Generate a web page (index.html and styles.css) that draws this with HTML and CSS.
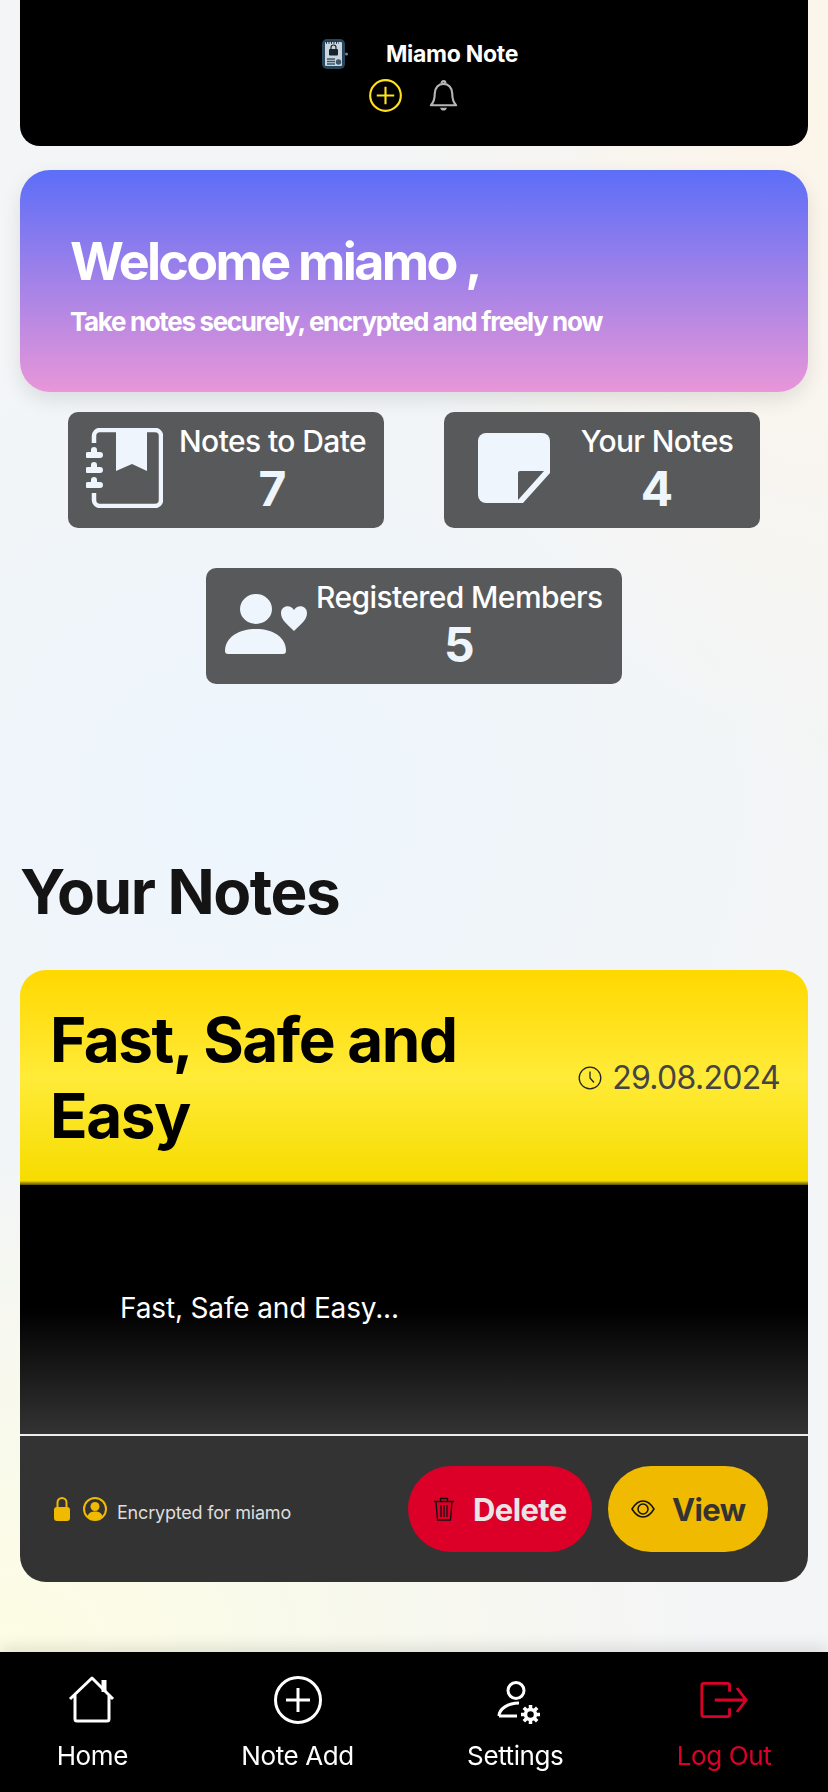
FILE: index.html
```html
<!DOCTYPE html>
<html lang="en">
<head>
    <meta charset="UTF-8">
    <meta name="viewport" content="width=device-width, initial-scale=1.0">
    <title>Miamo Note</title>
    <link rel="stylesheet" href="styles.css">
</head>
<body>
    <header class="top-bar">
        <div class="brand">
            <svg class="brand-logo" viewBox="0 0 26 32">
                <rect x="0" y="1" width="23" height="30" rx="5" fill="#27465c"/>
                <rect x="3" y="4" width="17" height="24" rx="1" fill="#c9d6de"/>
                <path d="M4 4.500h13" stroke="#1b2c38" stroke-width="2.500" stroke-dasharray="1 1.500"/>
                <rect x="7" y="11" width="9" height="6.500" rx="1" fill="#16242e"/>
                <path d="M9 11V9.500a2.500 2.500 0 0 1 5 0V11" fill="none" stroke="#16242e" stroke-width="1.200"/>
                <path d="M5 21h8M5 23.500h8M5 26h8" stroke="#3d5566" stroke-width="1.300"/>
                <circle cx="16.500" cy="24" r="2.700" fill="#3d5566"/>
                <circle cx="24.500" cy="16" r="1.500" fill="#6f8899"/>
            </svg>
            <span class="brand-name">Miamo Note</span>
        </div>
        <div class="top-icons">
            <svg class="top-icon" viewBox="0 0 34 34" fill="none" stroke="#ffe11f" stroke-width="2.200">
                <circle cx="17" cy="17" r="15.800"/>
                <path d="M17 8v18M8 17h18"/>
            </svg>
            <svg class="top-icon" viewBox="0 0 34 34" fill="none" stroke="#b5b5b5" stroke-width="2.200">
                <path d="M4 27c3-3 4-6 4-12 0-6 4-10 9-10s9 4 9 10c0 6 1 9 4 12z" stroke-linejoin="round"/>
                <path d="M15 4.500c0-3 4-3 4 0"/>
                <path d="M13.500 29.500h7c-1 4-6 4-7 0z" fill="#b5b5b5" stroke="none"/>
            </svg>
        </div>
    </header>

    <section class="hero">
        <h1>Welcome miamo ,</h1>
        <p>Take notes securely, encrypted and freely now</p>
    </section>

    <section class="stats">
        <div class="stat-row">
            <div class="stat-card">
                <svg class="stat-icon" viewBox="0 0 77 80">
                    <path d="M8 15V8a6 6 0 0 1 6-6h55a6 6 0 0 1 6 6v64a6 6 0 0 1-6 6H14a6 6 0 0 1-6-6v-7" fill="none" stroke="#eef5fd" stroke-width="4.500"/>
                    <path d="M30 2h31v41l-15-7-16 7z" fill="#eef5fd"/>
                    <path d="M5 22a3 3 0 0 1 6 0v2h3a2.500 2.500 0 0 1 0 6H2a2.500 2.500 0 0 1 0-6h3zM5 37a3 3 0 0 1 6 0v2h3a2.500 2.500 0 0 1 0 6H2a2.500 2.500 0 0 1 0-6h3zM5 52a3 3 0 0 1 6 0v2h3a2.500 2.500 0 0 1 0 6H2a2.500 2.500 0 0 1 0-6h3z" fill="#eef5fd"/>
                </svg>
                <div class="stat-text">
                    <span class="stat-label">Notes to Date</span>
                    <span class="stat-value">7</span>
                </div>
            </div>
            <div class="stat-card stat-card-notes">
                <svg class="stat-icon icon-note" viewBox="0 0 72 70">
                    <path d="M8 0h56a8 8 0 0 1 8 8v32L45 70H8a8 8 0 0 1-8-8V8a8 8 0 0 1 8-8z" fill="#eef5fd"/>
                    <path d="M42 38h24L40 67V40a2 2 0 0 1 2-2z" fill="#58595b"/>
                </svg>
                <div class="stat-text">
                    <span class="stat-label">Your Notes</span>
                    <span class="stat-value">4</span>
                </div>
            </div>
        </div>
        <div class="stat-row">
            <div class="stat-card stat-card-members">
                <svg class="stat-icon icon-members" viewBox="0 0 82 60">
                    <ellipse cx="31" cy="15" rx="16" ry="15" fill="#eef5fd"/>
                    <path d="M0 57c0-14 14-22 31-22s30 8 30 22a3 3 0 0 1-3 3H3a3 3 0 0 1-3-3z" fill="#eef5fd"/>
                    <path d="M69 37C62 30 56 26 56 19c0-8 10-9 13-3 3-6 13-5 13 3 0 7-6 11-13 18z" fill="#eef5fd"/>
                </svg>
                <div class="stat-text">
                    <span class="stat-label">Registered Members</span>
                    <span class="stat-value">5</span>
                </div>
            </div>
        </div>
    </section>

    <h2 class="section-title">Your Notes</h2>

    <article class="note">
        <div class="note-head">
            <h3>Fast, Safe and Easy</h3>
            <div class="note-date">
                <svg class="clock" viewBox="0 0 24 24" fill="none" stroke="#222" stroke-width="1.300">
                    <circle cx="12" cy="12" r="10.800"/>
                    <path d="M12 5.500V12l4 4.500"/>
                </svg>
                <span>29.08.2024</span>
            </div>
        </div>
        <div class="note-body">Fast, Safe and Easy...</div>
        <div class="note-foot">
            <div class="note-owner">
                <svg class="lock" viewBox="0 0 16 24">
                    <path d="M3.500 11V5.500a4.500 4.500 0 0 1 9 0V11" fill="none" stroke="#efba00" stroke-width="2"/>
                    <rect x="0" y="10" width="16" height="14" rx="3" fill="#efba00"/>
                </svg>
                <svg class="owner-icon" viewBox="0 0 24 24">
                    <circle cx="12" cy="12" r="11" fill="none" stroke="#efba00" stroke-width="2"/>
                    <circle cx="12" cy="9.500" r="4.500" fill="#efba00"/>
                    <path d="M4.500 19.500c1-4 4-5 7.500-5s6.500 1 7.500 5a11 11 0 0 1-15 0z" fill="#efba00"/>
                </svg>
                <span class="owner-text">Encrypted for miamo</span>
            </div>
            <div class="note-actions">
                <button class="btn btn-delete" type="button">
                    <svg class="btn-icon" viewBox="0 0 24 24" fill="none" stroke="#111" stroke-width="1.300">
                        <path d="M2 4.500h20M8.500 4.500V1.500h7v3M4 4.500 5.500 23h13L20 4.500M9 8v12M12 8v12M15 8v12"/>
                    </svg>
                    Delete
                </button>
                <button class="btn btn-view" type="button">
                    <svg class="btn-icon" viewBox="0 0 24 24" fill="none" stroke="#111" stroke-width="1.500">
                        <path d="M1 12c3-5 7-8 11-8s8 3 11 8c-3 5-7 8-11 8s-8-3-11-8z"/>
                        <circle cx="12" cy="12" r="5"/>
                    </svg>
                    View
                </button>
            </div>
        </div>
    </article>

    <nav class="bottom-nav">
        <a class="nav-item" href="#">
            <svg class="nav-icon" viewBox="0 0 48 48" fill="none" stroke="#fff" stroke-width="3">
                <path d="M2 23 24 2l21 21M7 19v24a2 2 0 0 0 2 2h30a2 2 0 0 0 2-2V19" stroke-linejoin="round"/>
                <path d="M36 4v12" stroke-width="5"/>
            </svg>
            Home
        </a>
        <a class="nav-item" href="#">
            <svg class="nav-icon" viewBox="0 0 48 48" fill="none" stroke="#fff" stroke-width="3">
                <circle cx="24" cy="24" r="22.500"/>
                <path d="M24 12v24M12 24h24"/>
            </svg>
            Note Add
        </a>
        <a class="nav-item" href="#">
            <svg class="nav-icon" viewBox="0 0 48 48" fill="none" stroke="#fff" stroke-width="3">
                <ellipse cx="25" cy="14.500" rx="8" ry="8"/>
                <path d="M8 40c0-7 9-13 20-13M8 40h18"/>
                <circle cx="39.500" cy="38.500" r="5" stroke-width="3.500"/>
                <path d="M39.500 29v3.500M39.500 44.500V48M30 38.500h3.500M45.500 38.500H49M32.800 31.800l2.500 2.500M43.700 42.700l2.500 2.500M46.200 31.800l-2.500 2.500M35.300 42.700l-2.500 2.500" stroke-width="3.500"/>
            </svg>
            Settings
        </a>
        <a class="nav-item nav-logout" href="#">
            <svg class="nav-icon" viewBox="0 0 52 40" fill="none" stroke="#dc0028" stroke-width="3">
                <path d="M32 11V4a2 2 0 0 0-2-2H4a2 2 0 0 0-2 2v32a2 2 0 0 0 2 2h26a2 2 0 0 0 2-2v-7"/>
                <path d="M16 20h34M40 7l10 13-10 13"/>
            </svg>
            Log Out
        </a>
    </nav>
</body>
</html>
```

FILE: styles.css
```css
* {
    box-sizing: border-box;
}

body, h1, h2, h3, p {
    margin: 0;
    padding: 0;
}

body {
    width: 828px;
    height: 1792px;
    overflow: hidden;
    padding: 0 20px;
    font-family: Inter, "Liberation Sans", sans-serif;
    background-color: #f4f5f6;
    background-image:
        radial-gradient(ellipse 420px 650px at 100% 120px, #fdf5ea 0, rgba(253, 245, 234, 0) 100%),
        radial-gradient(ellipse 700px 500px at 0 1650px, #fdfde4 0, rgba(253, 253, 228, 0) 100%),
        radial-gradient(ellipse 620px 560px at 30% 800px, #edf5fd 0, rgba(237, 245, 253, 0) 100%);
}

.top-bar {
    height: 146px;
    padding-top: 39px;
    background-color: #000;
    border-radius: 0 0 20px 20px;
    display: flex;
    flex-direction: column;
    align-items: center;
}

.brand {
    display: flex;
    align-items: center;
    gap: 38px;
    height: 30px;
}

.brand-logo {
    width: 26px;
    height: 32px;
    margin-left: 12px;
}

.brand-name {
    color: #fff;
    font-size: 23px;
    font-weight: 700;
    letter-spacing: -0.3px;
}

.top-icons {
    display: flex;
    gap: 25px;
    margin-top: 10px;
}

.top-icon {
    width: 33px;
    height: 33px;
}

.hero {
    height: 222px;
    margin-top: 24px;
    padding: 61px 50px 0;
    border-radius: 30px;
    color: #fff;
    background: linear-gradient(180deg, #5c6ef8, #e896d8);
    box-shadow: 0 8px 20px rgba(0, 0, 0, 0.1);
}

.hero h1 {
    font-size: 52px;
    line-height: 62px;
    font-weight: 700;
    letter-spacing: -2.7px;
}

.hero p {
    margin-top: 13px;
    font-size: 26px;
    line-height: 32px;
    font-weight: 700;
    letter-spacing: -1.35px;
}

.stats {
    margin-top: 20px;
    display: flex;
    flex-direction: column;
    gap: 40px;
}

.stat-row {
    display: flex;
    justify-content: center;
    gap: 60px;
}

.stat-card {
    width: 316px;
    height: 116px;
    padding: 14px 16px 0 18px;
    display: flex;
    align-items: flex-start;
    gap: 14px;
    color: #eef5fd;
    background-color: #58595b;
    border-radius: 10px;
}

.stat-card-notes {
    padding-right: 10px;
}

.stat-card-members {
    width: 416px;
    padding-right: 20px;
    gap: 9px;
}

.stat-icon {
    width: 77px;
    height: 80px;
    margin-top: 2px;
    flex-shrink: 0;
}

.icon-note {
    width: 72px;
    height: 70px;
    margin: 7px 0 0 16px;
}

.icon-members {
    width: 82px;
    height: 60px;
    margin: 12px 0 0 1px;
}

.stat-text {
    flex: 1;
    display: flex;
    flex-direction: column;
    align-items: center;
}

.stat-label {
    font-size: 30px;
    line-height: 30px;
    font-weight: 500;
    letter-spacing: -0.6px;
    color: #fff;
    white-space: nowrap;
}

.stat-value {
    margin-top: 4px;
    font-size: 48px;
    line-height: 58px;
    font-weight: 700;
}

.section-title {
    margin-top: 168px;
    height: 80px;
    font-size: 62px;
    line-height: 80px;
    font-weight: 700;
    letter-spacing: -1.5px;
    color: #141414;
}

.note {
    margin-top: 38px;
    height: 612px;
    border-radius: 26px;
    overflow: hidden;
    display: flex;
    flex-direction: column;
}

.note-head {
    height: 215px;
    padding: 0 28px 0 30px;
    display: flex;
    align-items: center;
    justify-content: space-between;
    background: linear-gradient(180deg, #ffd800 0, #ffeb38 50%, #f6dc00 98%, #5a4c00 100%);
}

.note-head h3 {
    width: 450px;
    font-size: 62px;
    line-height: 76px;
    font-weight: 700;
    letter-spacing: -1.5px;
    color: #000;
}

.note-date {
    display: flex;
    align-items: center;
    gap: 10px;
    font-size: 32px;
    letter-spacing: -0.7px;
    color: #444;
}

.clock {
    width: 24px;
    height: 24px;
}

.note-body {
    height: 251px;
    padding: 103px 0 0 100px;
    font-size: 28px;
    line-height: 40px;
    letter-spacing: -0.15px;
    color: #fff;
    background: linear-gradient(180deg, #000 0, #000 50%, #333 100%);
    border-bottom: 2px solid #eee;
}

.note-foot {
    flex: 1;
    padding: 0 40px 0 34px;
    display: flex;
    align-items: center;
    justify-content: space-between;
    background-color: #333;
}

.note-owner {
    display: flex;
    align-items: center;
    font-size: 18px;
    letter-spacing: -0.2px;
    color: #ddd;
}

.owner-text {
    margin-top: 6px;
}

.lock {
    width: 16px;
    height: 24px;
    margin-right: 13px;
}

.owner-icon {
    width: 24px;
    height: 24px;
    margin-right: 10px;
}

.note-actions {
    display: flex;
    gap: 16px;
}

.btn {
    height: 86px;
    display: flex;
    align-items: center;
    gap: 17px;
    border: none;
    border-radius: 43px;
    font-family: inherit;
    font-size: 31px;
    font-weight: 700;
    letter-spacing: -0.6px;
}

.btn-icon {
    width: 24px;
    height: 24px;
}

.btn-delete {
    width: 184px;
    padding: 0 0 0 24px;
    color: #e6e6e6;
    background-color: #dc0028;
}

.btn-view {
    width: 160px;
    padding: 0 0 0 23px;
    color: #333;
    background-color: #efba00;
}

.bottom-nav {
    position: fixed;
    left: 0;
    bottom: 0;
    width: 828px;
    height: 140px;
    display: flex;
    justify-content: space-around;
    background-color: #000;
    box-shadow: 0 -6px 14px rgba(0, 0, 0, 0.1);
}

.nav-item {
    padding-top: 24px;
    display: flex;
    flex-direction: column;
    align-items: center;
    gap: 16px;
    font-size: 26px;
    line-height: 32px;
    letter-spacing: -0.4px;
    color: #fff;
    text-decoration: none;
    white-space: nowrap;
}

.nav-icon {
    width: 48px;
    height: 48px;
    overflow: visible;
}

.nav-logout {
    color: #dc0028;
}
```
